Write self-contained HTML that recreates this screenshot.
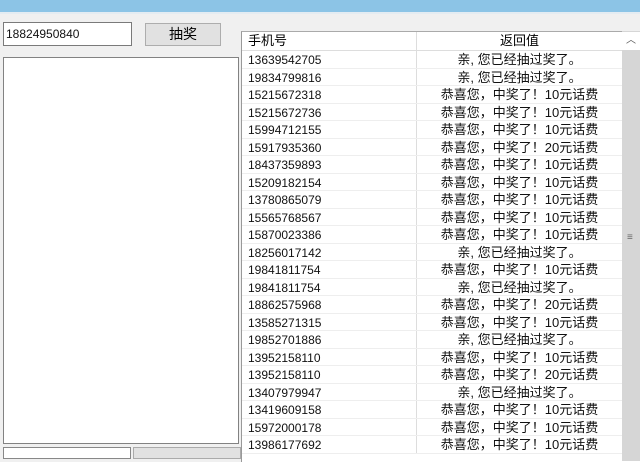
<!DOCTYPE html><html><head><meta charset="utf-8"><style>
body{margin:0;width:640px;height:450px;overflow:hidden;background:#f0f0f0;font-family:"Liberation Sans","Noto Sans CJK SC",sans-serif;position:relative}
.tb{position:absolute;left:0;top:0;width:640px;height:12px;background:#8cc4e6}
.tb2{position:absolute;left:0;top:12px;width:640px;height:2px;background:#e4ecf2}
.in{position:absolute;left:3px;top:22px;width:129px;height:24px;background:#fff;border:1px solid #7a7a7a;box-sizing:border-box;font-size:12px;line-height:22px;padding-left:2px;color:#111}
.btn{position:absolute;left:145px;top:23px;width:76px;height:23px;background:#e1e1e1;border:1px solid #adadad;box-sizing:border-box;font-size:14px;text-align:center;line-height:21px}
.lb{position:absolute;left:3px;top:57px;width:236px;height:387px;background:#fff;border:1px solid #828282;box-sizing:border-box}
.b2{position:absolute;left:3px;top:447px;width:126px;height:10px;background:#fff;border:1px solid #888}
.b3{position:absolute;left:133px;top:447px;width:106px;height:10px;background:#e1e1e1;border:1px solid #aaa}
.grid{position:absolute;left:241px;top:31px;width:399px;height:430px;background:#fff;border-left:1px solid #999;border-top:1px solid #aaa}
.hd{height:18px;font-size:13px;line-height:18px;display:flex;border-bottom:1px solid #ddd}
.c1{width:175px;padding-left:6px;box-sizing:border-box;border-right:1px solid #ddd}
.c2{width:205px;text-align:center;border-right:1px solid #ddd}
.r{height:17.5px;font-size:12px;line-height:18px;display:flex;border-bottom:1px solid #eee;box-sizing:border-box;color:#111}
.r .c2{font-size:13px}
.sb{position:absolute;left:622px;top:31px;width:18px;height:430px;background:#d6d6d6}
.up{position:absolute;left:622px;top:32px;width:18px;height:18px;background:#fff;font-size:10px;text-align:center;line-height:18px;color:#555}
.th{position:absolute;left:627px;top:232px;font-size:10px;color:#666}
</style></head><body>
<div class="tb"></div><div class="tb2"></div>
<div class="in">18824950840</div>
<div class="btn">抽奖</div>
<div class="lb"></div>
<div class="b2"></div><div class="b3"></div>
<div class="grid">
<div class="hd"><div class="c1">手机号</div><div class="c2">返回值</div></div>
<div class="r"><div class="c1">13639542705</div><div class="c2">亲, 您已经抽过奖了。</div></div>
<div class="r"><div class="c1">19834799816</div><div class="c2">亲, 您已经抽过奖了。</div></div>
<div class="r"><div class="c1">15215672318</div><div class="c2">恭喜您，中奖了！10元话费</div></div>
<div class="r"><div class="c1">15215672736</div><div class="c2">恭喜您，中奖了！10元话费</div></div>
<div class="r"><div class="c1">15994712155</div><div class="c2">恭喜您，中奖了！10元话费</div></div>
<div class="r"><div class="c1">15917935360</div><div class="c2">恭喜您，中奖了！20元话费</div></div>
<div class="r"><div class="c1">18437359893</div><div class="c2">恭喜您，中奖了！10元话费</div></div>
<div class="r"><div class="c1">15209182154</div><div class="c2">恭喜您，中奖了！10元话费</div></div>
<div class="r"><div class="c1">13780865079</div><div class="c2">恭喜您，中奖了！10元话费</div></div>
<div class="r"><div class="c1">15565768567</div><div class="c2">恭喜您，中奖了！10元话费</div></div>
<div class="r"><div class="c1">15870023386</div><div class="c2">恭喜您，中奖了！10元话费</div></div>
<div class="r"><div class="c1">18256017142</div><div class="c2">亲, 您已经抽过奖了。</div></div>
<div class="r"><div class="c1">19841811754</div><div class="c2">恭喜您，中奖了！10元话费</div></div>
<div class="r"><div class="c1">19841811754</div><div class="c2">亲, 您已经抽过奖了。</div></div>
<div class="r"><div class="c1">18862575968</div><div class="c2">恭喜您，中奖了！20元话费</div></div>
<div class="r"><div class="c1">13585271315</div><div class="c2">恭喜您，中奖了！10元话费</div></div>
<div class="r"><div class="c1">19852701886</div><div class="c2">亲, 您已经抽过奖了。</div></div>
<div class="r"><div class="c1">13952158110</div><div class="c2">恭喜您，中奖了！10元话费</div></div>
<div class="r"><div class="c1">13952158110</div><div class="c2">恭喜您，中奖了！20元话费</div></div>
<div class="r"><div class="c1">13407979947</div><div class="c2">亲, 您已经抽过奖了。</div></div>
<div class="r"><div class="c1">13419609158</div><div class="c2">恭喜您，中奖了！10元话费</div></div>
<div class="r"><div class="c1">15972000178</div><div class="c2">恭喜您，中奖了！10元话费</div></div>
<div class="r"><div class="c1">13986177692</div><div class="c2">恭喜您，中奖了！10元话费</div></div>
</div>
<div class="sb"></div><div class="up">︿</div><div class="th">≡</div>
</body></html>
